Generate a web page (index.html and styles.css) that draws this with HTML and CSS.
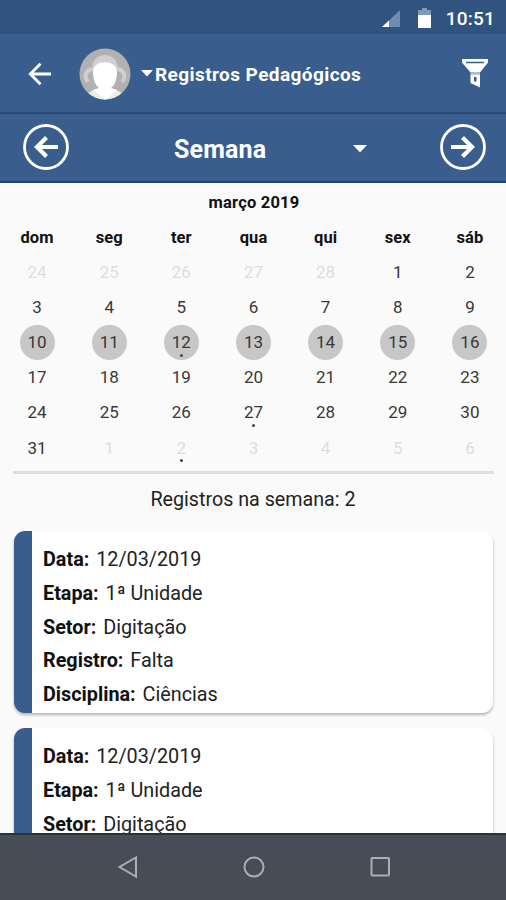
FILE: index.html
```html
<!DOCTYPE html>
<html lang="pt-BR">
<head>
<meta charset="utf-8">
<title>Registros Pedagógicos</title>
<link rel="stylesheet" href="styles.css">
</head>
<body>
<div class="status">
  <svg class="signal" width="18" height="18" viewBox="0 0 18 18"><path d="M18 0V17H0Z" fill="#6f8db3"/><path d="M7 10.5V17H0Z" fill="#fff"/></svg>
  <svg class="battery" width="13" height="22" viewBox="0 0 13 22"><path d="M4 0h5v2h4v5H0V2h4z" fill="#8097b5"/><path d="M0 7h13v13H0z" fill="#fff"/></svg>
  <span class="clock">10:51</span>
</div>
<header class="appbar">
  <svg class="back" width="24" height="24" viewBox="0 0 24 24" fill="none" stroke="#fff" stroke-width="2.8"><path d="M23 12H2.5M12.5 1.8L2.300 12l10.200 10.200"/></svg>
  <svg class="avatar" width="52" height="52" viewBox="0 0 52 52">
    <defs><clipPath id="disc"><circle cx="26" cy="26" r="25.500"/></clipPath></defs>
    <g clip-path="url(#disc)">
      <path d="M0 0h52v52H0z" fill="#b2b1b1"/>
      <path d="M13 22C12 2 40 2 39 22z" fill="#cfcfcf"/>
      <path d="M13 21c-7 2-8 8-4 13M39 21c7 2 8 8 4 13" fill="none" stroke="#cfcfcf" stroke-width="4"/>
      <path d="M7 52c0-9 8-10 14-12h10c6 2 14 3 14 12z" fill="#ececec"/>
      <path d="M14 24c0-13 24-13 24 0 0 7-2 13-6 16l6 2-12 10-12-10 6-2c-4-3-6-9-6-16z" fill="#fff"/>
    </g>
  </svg>
  <svg class="caret-small" width="12" height="7" viewBox="0 0 12 7"><path d="M0 0h12L6 6.500z" fill="#fff"/></svg>
  <h1 class="title">Registros Pedagógicos</h1>
  <svg class="filter" width="28" height="32" viewBox="0 0 28 32"><path fill="#fff" d="M1 1h26v3.500L19 14.500H9.500L1 4.500z"/><path d="M5 4.500h18" stroke="#395e8e" stroke-width="1.500"/><path fill="#b5c3d6" d="M9.500 14.500H19v2H9.500z"/><path fill="#fff" fill-rule="evenodd" d="M9.500 16.500H19v13l-9.500-4.500zM13 19v4.500h2.500V19z"/></svg>
</header>
<nav class="weekbar">
  <svg width="48" height="48" viewBox="0 0 48 48" fill="none" stroke="#fff"><circle cx="24" cy="24" r="21.500" stroke-width="2.800"/><path d="M36 24H14M24.500 14.500L15 24l9.500 9.500" stroke-width="4.200"/></svg>
  <span class="period">Semana</span>
  <svg class="caret" width="14" height="8" viewBox="0 0 14 8"><path d="M0 0h14L7 7.500z" fill="#fff"/></svg>
  <svg class="next" width="48" height="48" viewBox="0 0 48 48" fill="none" stroke="#fff"><circle cx="24" cy="24" r="21.500" stroke-width="2.800"/><path d="M12 24h22M23.500 14.500l9.500 9.500-9.500 9.500" stroke-width="4.200"/></svg>
</nav>
<main class="content">
  <h2 class="month">março 2019</h2>
  <div class="grid">
    <b>dom</b><b>seg</b><b>ter</b><b>qua</b><b>qui</b><b>sex</b><b>sáb</b>
    <span class="out">24</span><span class="out">25</span><span class="out">26</span><span class="out">27</span><span class="out">28</span><span>1</span><span>2</span>
    <span>3</span><span>4</span><span>5</span><span>6</span><span>7</span><span>8</span><span>9</span>
    <span class="sel">10</span><span class="sel">11</span><span class="sel dot">12</span><span class="sel">13</span><span class="sel">14</span><span class="sel">15</span><span class="sel">16</span>
    <span>17</span><span>18</span><span>19</span><span>20</span><span>21</span><span>22</span><span>23</span>
    <span>24</span><span>25</span><span>26</span><span class="dot">27</span><span>28</span><span>29</span><span>30</span>
    <span>31</span><span class="out">1</span><span class="out dot">2</span><span class="out">3</span><span class="out">4</span><span class="out">5</span><span class="out">6</span>
  </div>
  <div class="rule"></div>
  <p class="summary">Registros na semana: 2</p>
  <article class="card">
    <p><b>Data:</b> 12/03/2019</p>
    <p><b>Etapa:</b> 1ª Unidade</p>
    <p><b>Setor:</b> Digitação</p>
    <p><b>Registro:</b> Falta</p>
    <p><b>Disciplina:</b> Ciências</p>
  </article>
  <article class="card">
    <p><b>Data:</b> 12/03/2019</p>
    <p><b>Etapa:</b> 1ª Unidade</p>
    <p><b>Setor:</b> Digitação</p>
  </article>
</main>
<footer class="navbar">
  <svg width="24" height="24" viewBox="0 0 24 24"><path d="M20 2.500v19L3.500 12z"/></svg>
  <svg width="24" height="24" viewBox="0 0 24 24"><circle cx="12" cy="12" r="9.500"/></svg>
  <svg width="24" height="24" viewBox="0 0 24 24"><rect x="3.500" y="3" width="17.500" height="17.500" rx="1"/></svg>
</footer>
</body>
</html>
```
FILE: styles.css
```css
* { box-sizing: border-box; }
body {
  margin: 0;
  height: 900px;
  display: flex;
  flex-direction: column;
  overflow: hidden;
  background: #fafafa;
  color: #222;
  font-family: Roboto, "Liberation Sans", sans-serif;
}
h1, h2, p { margin: 0; }
svg { display: block; flex: none; }

.status {
  flex: none;
  height: 34px;
  display: flex;
  align-items: center;
  justify-content: flex-end;
  padding: 3px 11px 0 0;
  background: #30537f;
  color: #fff;
}
.battery { margin: 0 15px 0 18px; }
.clock { font-size: 19px; font-weight: 500; line-height: 22px; letter-spacing: .2px; }

.appbar {
  flex: none;
  height: 80px;
  display: flex;
  align-items: center;
  padding: 1px 17px 0 28px;
  background: #395e8e;
  border-bottom: 2px solid #2a4b76;
  color: #fff;
}
.avatar { margin-left: 27px; }
.caret-small { margin-left: 10px; }
.title { margin: 2px 0 0 2px; font-size: 19px; font-weight: 700; line-height: 24px; letter-spacing: .42px; }
.filter { margin-left: auto; }

.weekbar {
  flex: none;
  height: 69px;
  display: flex;
  align-items: center;
  padding: 0 19px 1px 22px;
  background: #395e8e;
  border-bottom: 2px solid #1d427a;
  color: #fff;
}
.period { margin-left: 104px; padding-top: 6px; font-size: 25px; font-weight: 700; line-height: 30px; letter-spacing: .15px; }
.caret { margin: 4px 0 0 87px; }
.next { margin-left: auto; }

.content { flex: 1; min-height: 0; overflow: hidden; }
.month { padding: 10px 0 0 2px; font-size: 16.500px; line-height: 20px; font-weight: 700; letter-spacing: .2px; text-align: center; color: #111; }
.grid {
  display: grid;
  grid-template-columns: repeat(7, 1fr);
  grid-auto-rows: 35.2px;
  justify-items: center;
  padding-left: 1px;
  margin-top: 6px;
}
.grid b, .grid span {
  width: 35px;
  height: 35px;
  display: flex;
  align-items: center;
  justify-content: center;
  font-size: 17px;
  color: #383838;
}
.grid b { padding-top: 2px; font-size: 16.500px; letter-spacing: .1px; color: #111; }
.grid .out { color: #dedede; }
.grid .sel { background: #c7c7c7; border-radius: 50%; }
.dot { position: relative; }
.dot::after {
  content: "";
  position: absolute;
  left: 16px;
  bottom: 3px;
  width: 3px;
  height: 3px;
  border-radius: 50%;
  background: #444;
}
.rule { height: 3px; margin: 6px 12px 0 13px; background: #dedede; }
.summary { margin-top: 14px; font-size: 19.700px; line-height: 24px; text-align: center; }

.card {
  height: 182px;
  margin: 19px 13px 0 14px;
  padding: 12px 0 0 11px;
  border-left: 18px solid #395e8e;
  border-radius: 11px;
  background: #fff;
  box-shadow: 0 2px 3px rgba(0, 0, 0, .28);
  font-size: 19.800px;
  line-height: 33.700px;
}
.card + .card { margin-top: 15px; }
.card b { color: #111; margin-right: 2px; }

.navbar {
  flex: none;
  height: 67px;
  display: flex;
  align-items: center;
  justify-content: center;
  gap: 102px;
  padding: 0 0 2px 1px;
  background: #464d56;
  border-top: 2px solid #23343a;
}
.navbar svg { fill: none; stroke: #a9afb3; stroke-width: 2; }
```
